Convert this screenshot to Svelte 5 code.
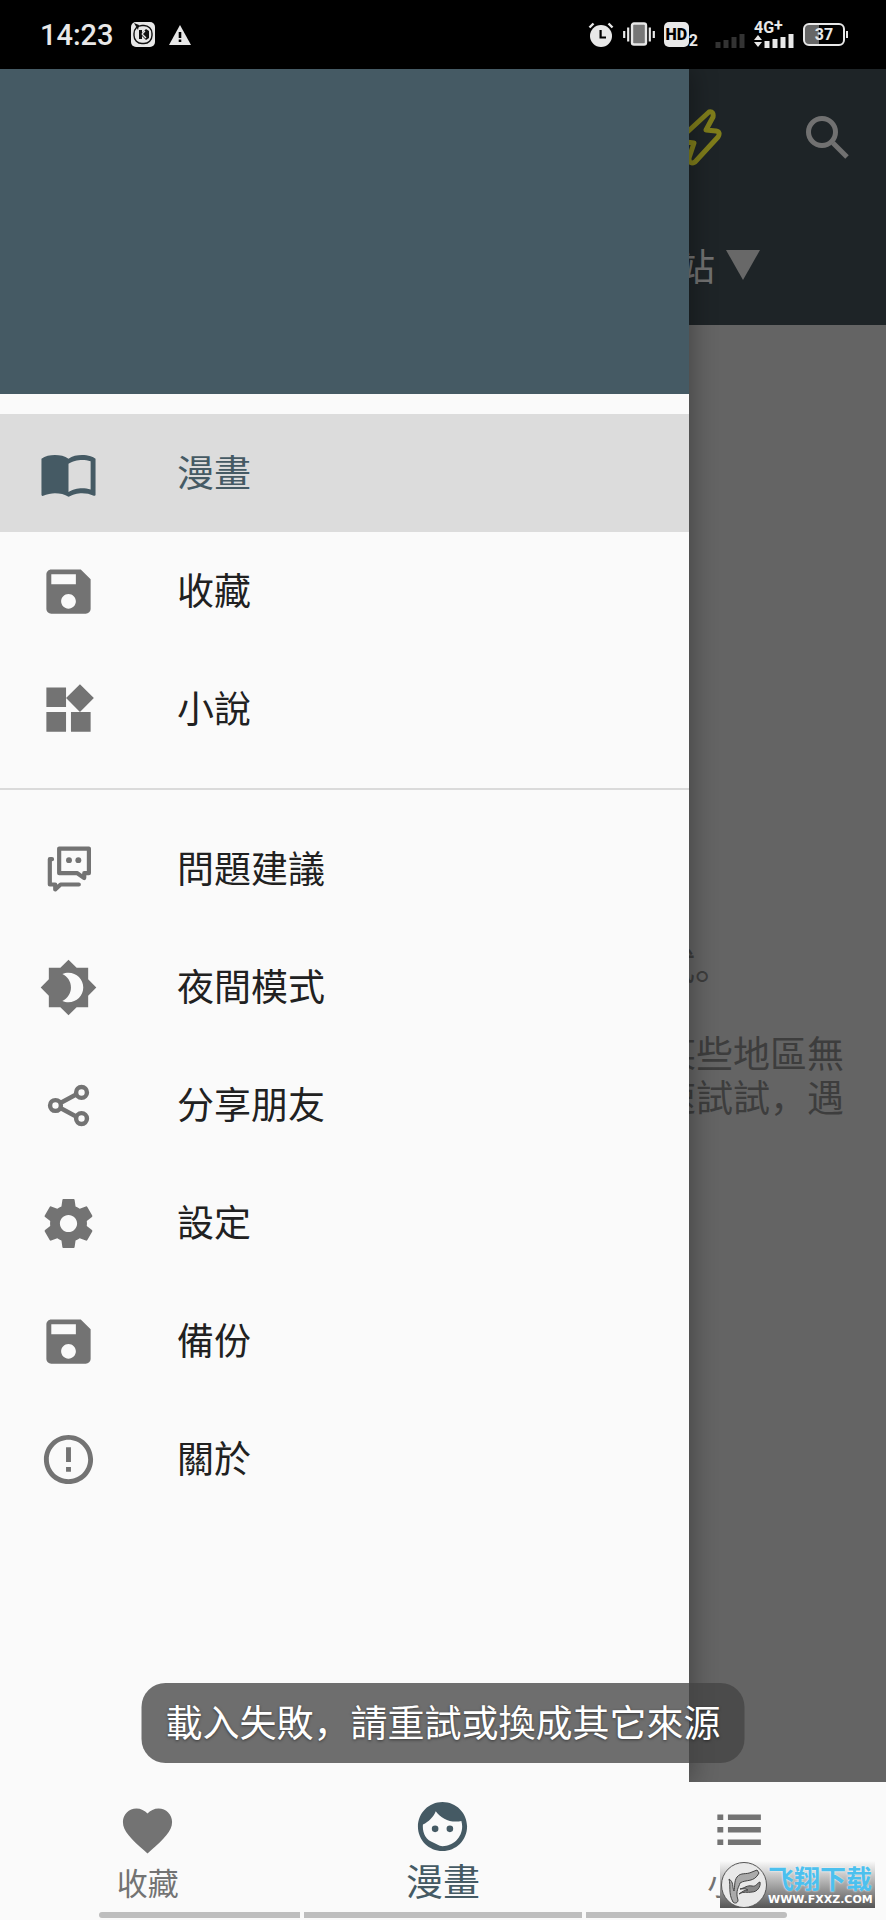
<script>
	const PRIMARY = [
		{ icon: 'book', label: '漫畫' },
		{ icon: 'save', label: '收藏' },
		{ icon: 'widgets', label: '小說' }
	];
	const SECONDARY = [
		{ icon: 'feedback', label: '問題建議' },
		{ icon: 'night', label: '夜間模式' },
		{ icon: 'share', label: '分享朋友' },
		{ icon: 'settings', label: '設定' },
		{ icon: 'save', label: '備份' },
		{ icon: 'about', label: '關於' }
	];
	const TABS = [
		{ icon: 'heart', label: '收藏' },
		{ icon: 'face', label: '漫畫' },
		{ icon: 'list', label: '小說' }
	];

	// Filled icons on a 24x24 grid.
	/** @type {Record<string, string>} */
	const PATHS = {
		book: 'M21 5c-1.11-.35-2.33-.5-3.5-.5-1.95 0-4.05.4-5.5 1.5-1.45-1.1-3.55-1.5-5.5-1.5S2.45 4.9 1 6v14.65c0 .25.25.5.5.5.1 0 .15-.05.25-.05C3.1 20.45 5.05 20 6.5 20c1.95 0 4.05.4 5.5 1.5 1.35-.85 3.8-1.5 5.5-1.5 1.65 0 3.35.3 4.75 1.05.1.05.15.05.25.05.25 0 .5-.25.5-.5V6c-.6-.45-1.25-.75-2-1zm0 13.5c-1.1-.35-2.3-.5-3.5-.5-1.7 0-4.15.65-5.5 1.5V8c1.35-.85 3.8-1.5 5.5-1.5 1.2 0 2.4.15 3.5.5v11.5z',
		save: 'M17 3H5c-1.11 0-2 .9-2 2v14c0 1.1.89 2 2 2h14c1.1 0 2-.9 2-2V7l-4-4zm-5 16c-1.66 0-3-1.34-3-3s1.34-3 3-3 3 1.34 3 3-1.34 3-3 3zm3-10H5V5h10v4z',
		widgets: 'M13 13v8h8v-8h-8zM3 21h8v-8H3v8zM3 3v8h8V3H3zm13.66-1.31L11 7.34 16.66 13l5.66-5.66-5.66-5.65z',
		night: 'M20 8.69V4h-4.69L12 .69 8.69 4H4v4.69L.69 12 4 15.31V20h4.69L12 23.31 15.31 20H20v-4.69L23.31 12 20 8.69zM12 18c-.89 0-1.74-.2-2.5-.55C11.56 16.5 13 14.42 13 12s-1.44-4.5-3.5-5.45C10.26 6.2 11.11 6 12 6c3.31 0 6 2.69 6 6s-2.69 6-6 6z',
		settings: 'M19.43 12.98c.04-.32.07-.64.07-.98s-.03-.66-.07-.98l2.11-1.65c.19-.15.24-.42.12-.64l-2-3.46c-.12-.22-.39-.3-.61-.22l-2.49 1c-.52-.4-1.08-.73-1.69-.98l-.38-2.65C14.46 2.18 14.25 2 14 2h-4c-.25 0-.46.18-.49.42l-.38 2.65c-.61.25-1.17.59-1.69.98l-2.49-1c-.23-.09-.49 0-.61.22l-2 3.46c-.13.22-.07.49.12.64l2.11 1.65c-.04.32-.07.65-.07.98s.03.66.07.98l-2.11 1.65c-.19.15-.24.42-.12.64l2 3.46c.12.22.39.3.61.22l2.49-1c.52.4 1.08.73 1.69.98l.38 2.65c.03.24.24.42.49.42h4c.25 0 .46-.18.49-.42l.38-2.65c.61-.25 1.17-.59 1.69-.98l2.49 1c.23.09.49 0 .61-.22l2-3.46c.12-.22.07-.49-.12-.64l-2.11-1.65zM12 15.5c-1.93 0-3.5-1.57-3.5-3.5s1.57-3.5 3.5-3.5 3.5 1.57 3.5 3.5-1.57 3.5-3.5 3.5z',
		about: 'M11 15h2v2h-2zm0-8h2v6h-2zm1-5C6.48 2 2 6.48 2 12s4.48 10 10 10 10-4.48 10-10S17.52 2 12 2zm0 18c-4.42 0-8-3.58-8-8s3.58-8 8-8 8 3.58 8 8-3.58 8-8 8z',
		heart: 'M12 21.35l-1.45-1.32C5.4 15.36 2 12.28 2 8.5 2 5.42 4.42 3 7.5 3c1.74 0 3.41.81 4.5 2.09C13.09 3.81 14.76 3 16.5 3 19.58 3 22 5.42 22 8.5c0 3.78-3.4 6.86-8.55 11.54L12 21.35z',
		face: 'M9 11.6a1.35 1.35 0 1 0 0 2.7 1.35 1.35 0 0 0 0-2.7zm6 0a1.35 1.35 0 1 0 0 2.7 1.35 1.35 0 0 0 0-2.7zM12 2C6.48 2 2 6.48 2 12s4.48 10 10 10 10-4.48 10-10S17.52 2 12 2zm0 18c-1.6-.1-2.4-.9-3.6-1.4C5.4 17.6 4 15 4 12c0-.29.02-.58.05-.86 2.36-1.05 4.23-2.98 5.21-5.37C11.07 8.33 14.05 10 17.42 10c.78 0 1.53-.09 2.25-.26.21.71.33 1.47.33 2.26 0 4.41-3.59 8-8 8z',
		list: 'M3.4 5.5h2.4v2.2H3.4zM7.7 5.5h13.4v2.2H7.7zM3.4 10.6h2.4v2.2H3.4zM7.7 10.6h13.4v2.2H7.7zM3.4 15.7h2.4v2.2H3.4zM7.7 15.7h13.4v2.2H7.7z'
	};

	let current = $state('漫畫');
	let tab = $state('漫畫');
</script>

{#snippet icon(name)}
	<svg class="icon" viewBox="0 0 24 24" aria-hidden="true">
		{#if name === 'feedback'}
			<g fill="none" stroke="currentColor" stroke-width="1.7" stroke-linejoin="round" stroke-linecap="round">
				<path d="M8.2 3.5h12.1v10H18.4v2l-2.8-2H8.2z" />
				<path d="M5.3 7.8h-.9v10.3h2.2v2l2.2-2h7.4" />
			</g>
			<circle cx="12.2" cy="8.2" r="1.2" />
			<circle cx="16" cy="8.2" r="1.2" />
		{:else if name === 'share'}
			<g fill="none" stroke="currentColor" stroke-width="1.8">
				<circle cx="6.7" cy="12" r="2.2" />
				<circle cx="17.3" cy="6.7" r="2.2" />
				<circle cx="17.3" cy="17.3" r="2.2" />
				<path d="M8.7 11l6.6-3.6M8.7 13l6.6 3.6" />
			</g>
		{:else}
			<path d={PATHS[name]} />
		{/if}
	</svg>
{/snippet}

{#snippet menu(items)}
	<ul>
		{#each items as item}
			<li>
				<button
					class="item"
					class:selected={current === item.label}
					onclick={() => (current = item.label)}
				>
					{@render icon(item.icon)}
					<span>{item.label}</span>
				</button>
			</li>
		{/each}
	</ul>
{/snippet}

<div class="screen">
	<header class="status">
		<time>14:23</time>
		<svg width="24" height="25" viewBox="0 0 24 25" aria-hidden="true">
			<rect width="24" height="25" rx="5" fill="#e8e8e8" />
			<rect x="3" y="3.5" width="18" height="18" rx="8" fill="none" stroke="#111" stroke-width="1.4" />
			<path d="M8 8h3v3l4-4 3 2v7l-3 2-4-4v3H8z" fill="#111" />
			<path d="M11 12l3-3M11 12l4 4" stroke="#e8e8e8" stroke-width="1.4" />
			<path d="M3 1l5 2-1 5z" fill="#111" />
		</svg>
		<svg class="warn" width="22" height="20" viewBox="0 0 22 20" aria-hidden="true">
			<path d="M11 0l11 20H0z" fill="#e8e8e8" />
			<path d="M9.7 7h2.6v6H9.7zM9.7 14.6h2.6V17H9.7z" fill="#000" />
		</svg>

		<div class="indicators">
			<svg width="26" height="25" viewBox="0 0 26 25" aria-hidden="true">
				<circle cx="13" cy="14" r="11" fill="#e8e8e8" />
				<path d="M1.5 5.5l4-4M24.5 5.5l-4-4" stroke="#e8e8e8" stroke-width="2.4" />
				<path d="M12.6 8v7.5H18" fill="none" stroke="#000" stroke-width="2.2" />
			</svg>
			<svg width="32" height="25" viewBox="0 0 32 25" aria-hidden="true">
				<rect x="9" y="1.5" width="14" height="21" rx="2" fill="#777" stroke="#e8e8e8" stroke-width="2.4" />
				<path d="M5.2 5.5v14M1.2 9v7M26.8 5.5v14M30.8 9v7" stroke="#e8e8e8" stroke-width="2.2" />
			</svg>
			<span class="hd"><b>HD</b><sub>2</sub></span>
			<svg class="weak" width="30" height="14" viewBox="0 0 30 14" aria-hidden="true">
				<path d="M3 8v6M11 6v8M19 3v11M27 0v14" stroke="#333" stroke-width="5" />
			</svg>
			<div class="mobile">
				<span>4G<sup>+</sup></span>
				<svg width="40" height="14" viewBox="0 0 40 14" aria-hidden="true">
					<path d="M0 6l4-5 4 5zM0 8l4 5 4-5z" fill="#e8e8e8" />
					<path d="M13 7v7M21 5v9M29 3v11M37 0v14" stroke="#e8e8e8" stroke-width="5" />
				</svg>
			</div>
			<span class="battery">37</span>
		</div>
	</header>

	<div class="body">
		<main>
			<div class="appbar">
				<div class="toolbar">
					<svg width="46" height="58" viewBox="0 0 46 58" aria-hidden="true">
						<path
							d="M33 4L7 28q-4 5 3 6l8 1-5 15q0 7 6 4l23-25q3-5-2-6l-10-1 7-13q1-6-4-5z"
							fill="none"
							stroke="#7f7d1b"
							stroke-width="5"
							stroke-linejoin="round"
						/>
					</svg>
					<button class="search" aria-label="搜尋">
						<svg width="44" height="44" viewBox="0 0 44 44" aria-hidden="true">
							<circle cx="16" cy="17" r="13.5" fill="none" stroke="currentColor" stroke-width="5" />
							<path d="M27 28l14 14" stroke="currentColor" stroke-width="5" />
						</svg>
					</button>
				</div>
				<button class="site">
					<span>網站</span>
					<svg width="34" height="30" viewBox="0 0 34 30" aria-hidden="true">
						<path d="M0 0h34L17 30z" fill="#686868" />
					</svg>
				</button>
			</div>
			<div class="message">
				<p class="retry">試。</p>
				<p>某些地區無<br />速試試，遇</p>
			</div>
		</main>

		<aside class="drawer">
			<div class="cover"></div>
			<nav aria-label="選單">
				{@render menu(PRIMARY)}
				<hr />
				{@render menu(SECONDARY)}
			</nav>
		</aside>

		<div class="toast" role="status">載入失敗，請重試或換成其它來源</div>
	</div>

	<footer>
		<nav class="tabs" aria-label="分頁">
			{#each TABS as t}
				<button class="tab" class:active={tab === t.label} onclick={() => (tab = t.label)}>
					{@render icon(t.icon)}
					<span>{t.label}</span>
				</button>
			{/each}
		</nav>
		<div class="gesture"><i></i><i class="home"></i><i></i></div>

		<div class="badge">
			<svg width="48" height="46" viewBox="0 0 48 46" aria-hidden="true">
				<circle cx="24" cy="23" r="22.5" fill="#e9e9e9" stroke="#555" />
				<path
					d="M9 17C11 24 8 31 13 40c2 2 5 1 5-2-3-9 1-13 2-17 6-4 14 0 19-10l-2-3-5 2c-6 3-11 0-15 5-3 4-2 10-3 14-2-4 0-9-5-12z"
					fill="#aaa"
					stroke="#444"
				/>
				<path d="M20 27c5-1 7-4 12-3 4 1 5-3 8-4 1 5-3 10-8 10-5 1-8-1-13 2 3-2 5-4 9-4-3-2-5-1-8-1z" fill="#888" stroke="#444" />
			</svg>
			<div class="words">
				<strong>飞翔下载</strong>
				<small>WWW.FXXZ.COM</small>
			</div>
		</div>
	</footer>
</div>

<style>
	:global(body) {
		margin: 0;
		background: #fafafa;
	}

	.screen {
		display: flex;
		flex-direction: column;
		min-height: 100vh;
		font-family: 'Noto Sans CJK SC', 'Noto Sans', sans-serif;
		font-size: 37px;
		color: #212121;
	}

	button {
		margin: 0;
		padding: 0;
		border: 0;
		background: none;
		font: inherit;
		color: inherit;
		cursor: pointer;
	}

	.icon {
		display: block;
		flex: none;
		width: 59px;
		height: 59px;
		fill: currentColor;
	}

	/* Status bar */
	.status {
		display: flex;
		align-items: center;
		box-sizing: border-box;
		height: 69px;
		padding: 0 41px 0 40px;
		background: #000;
		color: #e8e8e8;
		font-family: Roboto, sans-serif;
	}

	time {
		margin-right: 17px;
		font-size: 29px;
		font-weight: 500;
	}

	.warn {
		margin-left: 14px;
	}

	.indicators {
		display: flex;
		align-items: center;
		gap: 9px;
		margin-left: auto;
	}

	.hd {
		display: flex;
		align-items: flex-end;
	}

	.hd b {
		width: 25px;
		border-radius: 5px;
		background: #e8e8e8;
		color: #000;
		font-size: 16px;
		font-weight: 900;
		line-height: 25px;
		text-align: center;
	}

	.hd sub {
		font-size: 16px;
		font-weight: 700;
		line-height: 12px;
	}

	.weak {
		align-self: flex-end;
		margin-left: 8px;
	}

	.mobile {
		display: flex;
		flex-direction: column;
		font-size: 16px;
		font-weight: 700;
		line-height: 12px;
	}

	.mobile sup {
		font-size: 16px;
		line-height: 0;
		vertical-align: 2px;
	}

	.battery {
		position: relative;
		box-sizing: border-box;
		width: 42px;
		height: 23px;
		border: 2px solid #e8e8e8;
		border-radius: 6px;
		background: linear-gradient(to right, #666 36%, #000 36%);
		font-size: 16px;
		font-weight: 700;
		line-height: 20px;
		text-align: center;
	}

	.battery::after {
		content: '';
		position: absolute;
		top: 6px;
		right: -5px;
		width: 2px;
		height: 7px;
		background: #e8e8e8;
	}

	/* The drawer lies over the dimmed page */
	.body {
		position: relative;
		display: grid;
		flex: 1;
	}

	main,
	.drawer {
		grid-area: 1 / 1;
	}

	main {
		background: #646464;
		color: #3d3d3d;
	}

	.appbar {
		height: 256px;
		background: #1e2427;
		color: #717171;
	}

	.toolbar {
		display: flex;
		align-items: center;
		justify-content: flex-end;
		height: 136px;
		padding-right: 36px;
	}

	.search {
		margin-left: 84px;
	}

	.search svg {
		display: block;
	}

	.site {
		display: flex;
		align-items: center;
		gap: 11px;
		height: 120px;
		margin-left: auto;
		padding-right: 126px;
	}

	.message {
		padding: 617px 42px 0 0;
		line-height: 44px;
		text-align: right;
	}

	.message p {
		margin: 0;
	}

	.message .retry {
		padding: 0 112px 44px 0;
	}

	.drawer {
		position: relative;
		width: 77.8%;
		background: #fafafa;
		box-shadow: 4px 0 24px rgba(0, 0, 0, 0.3);
		clip-path: inset(0 -30px 0 0);
	}

	.cover {
		height: 325px;
		margin-bottom: 20px;
		background: #455a64;
	}

	ul {
		margin: 0;
		padding: 0;
		list-style: none;
	}

	.item {
		display: flex;
		align-items: center;
		gap: 79px;
		width: 100%;
		height: 118px;
		padding-left: 39px;
		text-align: left;
	}

	.item span {
		padding-bottom: 4px;
	}

	.item .icon {
		color: #737373;
	}

	.item.selected {
		background: #dcdcdc;
	}

	.item.selected,
	.item.selected .icon {
		color: #455a64;
	}

	hr {
		height: 2px;
		margin: 20px 0;
		border: 0;
		background: #dadada;
	}

	.toast {
		position: absolute;
		bottom: 19px;
		left: 50%;
		transform: translateX(-50%);
		padding: 0 24px 4px;
		border-radius: 24px;
		background: rgba(68, 68, 68, 0.77);
		color: #fff;
		line-height: 76px;
		text-shadow: 0 1px 3px rgba(0, 0, 0, 0.5);
		white-space: nowrap;
	}

	/* Bottom bar */
	footer {
		position: relative;
		background: #fafafa;
	}

	.tabs {
		display: flex;
		height: 130px;
	}

	.tab {
		display: flex;
		flex: 1;
		flex-direction: column;
		align-items: center;
		justify-content: flex-end;
		color: #737373;
		font-size: 31px;
		line-height: 44px;
	}

	.tab span {
		margin-bottom: 8px;
	}

	.tab.active {
		color: #455a64;
		font-size: 37px;
		line-height: 48px;
	}

	.gesture {
		display: flex;
		gap: 4px;
		padding: 0 99px 2px;
	}

	.gesture i {
		flex: 200;
		height: 6px;
		background: #bebebe;
	}

	.gesture .home {
		flex: 278;
	}

	.gesture i:first-child {
		border-radius: 3px 0 0 3px;
	}

	.gesture i:last-child {
		border-radius: 0 3px 3px 0;
	}

	.badge {
		position: absolute;
		right: 11px;
		bottom: 12px;
		display: flex;
		align-items: center;
		width: 155px;
		height: 47px;
		background: linear-gradient(#fafafa, #555);
	}

	.badge svg {
		flex: none;
	}

	.words {
		display: flex;
		flex-direction: column;
	}

	.words strong {
		color: #4cc0ee;
		font-size: 26px;
		line-height: 30px;
		text-shadow: 0 0 2px #fff;
	}

	.words small {
		color: #fff;
		font-family: 'DejaVu Sans', sans-serif;
		font-size: 11px;
		font-weight: 700;
		line-height: 14px;
	}
</style>
